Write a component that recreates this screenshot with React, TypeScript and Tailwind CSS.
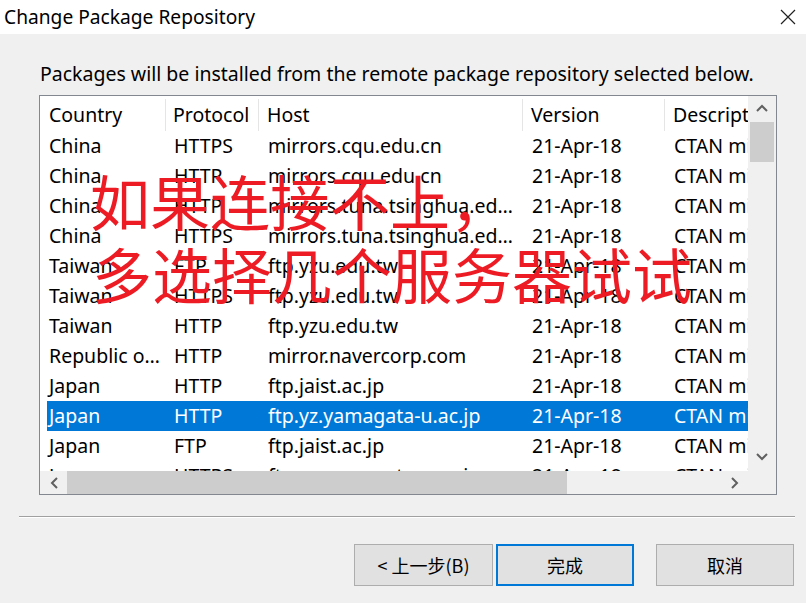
import React from "react";

const rows: [string, string, string][] = [
  ["China", "HTTPS", "mirrors.cqu.edu.cn"],
  ["China", "HTTP", "mirrors.cqu.edu.cn"],
  ["China", "HTTP", "mirrors.tuna.tsinghua.edu.cn"],
  ["China", "HTTPS", "mirrors.tuna.tsinghua.edu.cn"],
  ["Taiwan", "FTP", "ftp.yzu.edu.tw"],
  ["Taiwan", "HTTPS", "ftp.yzu.edu.tw"],
  ["Taiwan", "HTTP", "ftp.yzu.edu.tw"],
  ["Republic of Korea", "HTTP", "mirror.navercorp.com"],
  ["Japan", "HTTP", "ftp.jaist.ac.jp"],
  ["Japan", "HTTP", "ftp.yz.yamagata-u.ac.jp"],
  ["Japan", "FTP", "ftp.jaist.ac.jp"],
  ["Japan", "HTTPS", "ftp.yz.yamagata-u.ac.jp"],
];

const Chevron = ({ d }: { d: string }) => (
  <svg width="14" height="14" viewBox="0 0 14 14">
    <polyline points={d} fill="none" stroke="#606060" strokeWidth="2" />
  </svg>
);

export default function App() {
  const font = { fontFamily: '"Noto Sans", "Noto Sans CJK SC", sans-serif' };
  return (
    <div className="w-[806px] h-[603px] bg-[#f0f0f0] flex flex-col relative overflow-hidden" style={font}>
      {/* Title bar */}
      <div className="h-[34px] bg-white flex items-center justify-between pl-[4px] pr-[10px] shrink-0">
        <span className="text-[19.2px] text-black leading-none">Change Package Repository</span>
        <svg width="16" height="16" viewBox="0 0 16 16">
          <path d="M1 1 L15 15 M15 1 L1 15" stroke="#222" strokeWidth="1.2" />
        </svg>
      </div>

      <div className="pl-[40px] pt-[28px] h-[61px] text-[19.5px] leading-[24px] text-black whitespace-nowrap">
        Packages will be installed from the remote package repository selected below.
      </div>

      {/* List box */}
      <div className="ml-[39px] w-[738px] h-[400px] border border-[#828790] bg-white grid grid-cols-[708px_28px] grid-rows-[375px_23px]">
        {/* list viewport */}
        <div className="overflow-hidden text-[19.5px] text-black">
          <div className="h-[35px] flex items-stretch pt-[3px] w-[900px]">
            <div className="w-[126px] pl-[9px] flex items-center border-r border-[#e5e5e5]">Country</div>
            <div className="w-[93px] pl-[7px] flex items-center border-r border-[#e5e5e5] whitespace-nowrap overflow-hidden">Protocol</div>
            <div className="w-[264px] pl-[8px] flex items-center border-r border-[#e5e5e5]">Host</div>
            <div className="w-[142px] pl-[8px] flex items-center border-r border-[#e5e5e5]">Version</div>
            <div className="w-[200px] pl-[8px] flex items-center">Description</div>
          </div>
          {rows.map((r, i) => {
            const sel = i === 9;
            return (
              <div key={i} className="h-[30px] flex pl-[7px]">
                <div className={`flex items-center w-[900px] ${sel ? "bg-[#0078d7] text-white" : ""}`}>
                  <div className="w-[119px] pl-[2px] pr-[4px] truncate">{r[0]}</div>
                  <div className="w-[93px] pl-[8px] truncate">{r[1]}</div>
                  <div className="w-[264px] pl-[9px] pr-[2px] truncate">{r[2]}</div>
                  <div className="w-[142px] pl-[9px] truncate">21-Apr-18</div>
                  <div className="w-[200px] pl-[9px] whitespace-nowrap">CTAN mirror</div>
                </div>
              </div>
            );
          })}
        </div>
        {/* vertical scrollbar */}
        <div className="bg-[#f0f0f0] flex flex-col items-center">
          <div className="h-[26px] flex items-center justify-center">
            <Chevron d="2,9 7,4 12,9" />
          </div>
          <div className="w-[24px] h-[40px] bg-[#cdcdcd]" />
          <div className="flex-1" />
          <div className="h-[26px] flex items-center justify-center pb-[4px]">
            <Chevron d="2,5 7,10 12,5" />
          </div>
        </div>
        {/* horizontal scrollbar */}
        <div className="bg-[#f0f0f0] flex items-center">
          <div className="w-[27px] flex items-center justify-center pl-[2px]">
            <Chevron d="9,2 4,7 9,12" />
          </div>
          <div className="w-[500px] h-[23px] bg-[#cdcdcd]" />
          <div className="flex-1" />
          <div className="w-[28px] flex items-center justify-center">
            <Chevron d="5,2 10,7 5,12" />
          </div>
        </div>
        <div className="bg-[#f0f0f0]" />
      </div>

      {/* Separator */}
      <div className="mt-[21px] ml-[19px] w-[776px] h-[1px] bg-[#a0a0a0]" />
      <div className="ml-[19px] w-[776px] h-[1px] bg-white" />

      {/* Buttons */}
      <div className="mt-[26px] flex pl-[354px]" style={{ fontFamily: '"Noto Sans CJK SC", "Noto Sans", sans-serif' }}>
        <button className="w-[139px] h-[42px] bg-[#e1e1e1] border border-[#adadad] text-[18px] text-black flex items-center justify-center">
          &lt; 上一步(B)
        </button>
        <button className="ml-[3px] w-[138px] h-[42px] bg-[#e1e1e1] border-2 border-[#0078d7] text-[18px] text-black flex items-center justify-center">
          完成
        </button>
        <button className="ml-[22px] w-[138px] h-[42px] bg-[#e1e1e1] border border-[#adadad] text-[18px] text-black flex items-center justify-center">
          取消
        </button>
      </div>

      {/* Red overlay text */}
      <div
        className="absolute left-[90px] top-[163px] text-[60px] leading-[73px] text-[#ed1c24] whitespace-nowrap pointer-events-none"
        style={{ fontFamily: '"Noto Sans CJK SC", sans-serif' }}
      >
        <div>如果连接不上，</div>
        <div className="pl-[2px]">多选择几个服务器试试</div>
      </div>
    </div>
  );
}
